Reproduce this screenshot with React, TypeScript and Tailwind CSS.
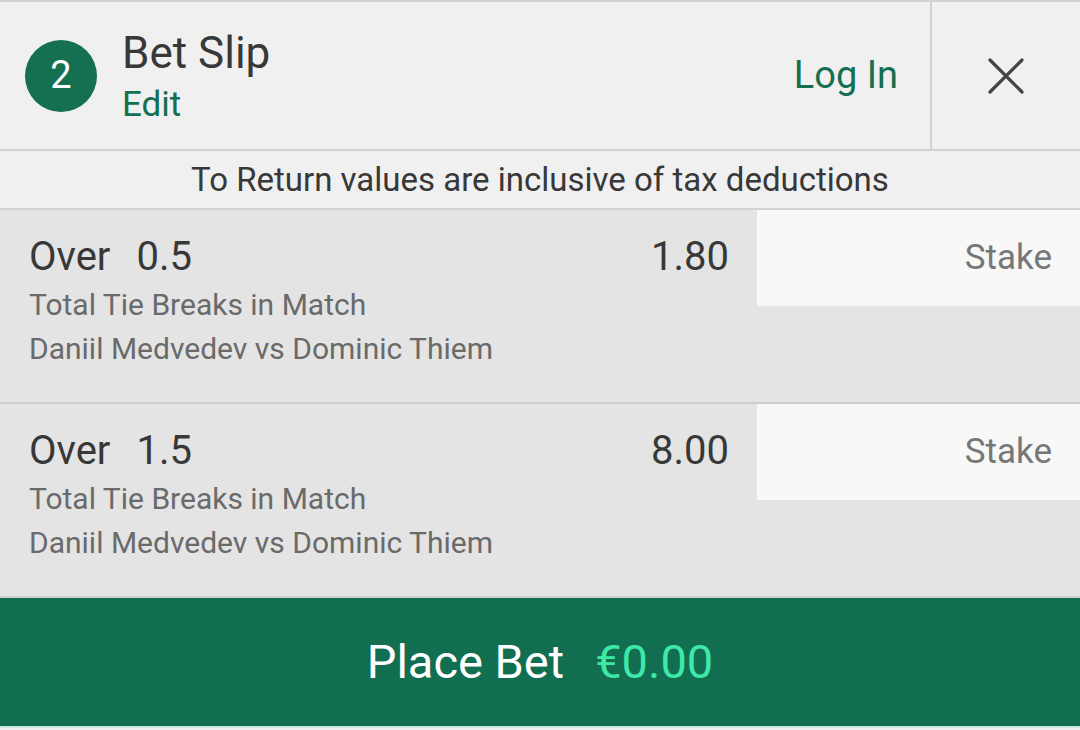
import React from "react";

const bets = [
    { line: "0.5", odds: "1.80" },
    { line: "1.5", odds: "8.00" },
];

function BetRow({ line, odds }: { line: string; odds: string }) {
    return (
        <div className="flex h-[194px] bg-[#e4e4e4] border-b-[2px] border-[#cfcfcf]">
            <div className="flex-1 pl-[29px] pr-[28px] pt-[24px]">
                <div className="flex justify-between text-[40px] leading-[46px] text-[#383838]">
                    <span>
                        Over<span className="ml-[26px]">{line}</span>
                    </span>
                    <span>{odds}</span>
                </div>
                <div className="mt-[3px] text-[30px] leading-[44px] text-[#6a6a6a]">
                    <p>Total Tie Breaks in Match</p>
                    <p>Daniil Medvedev vs Dominic Thiem</p>
                </div>
            </div>
            <div className="w-[323px] h-[96px] bg-[#f8f8f8] flex items-center justify-end pr-[28px] text-[35px] text-[#777]">
                Stake
            </div>
        </div>
    );
}

export default function App() {
    return (
        <div className="w-[1080px] h-[730px] bg-[#f0f0f0] overflow-hidden" style={{ fontFamily: "Roboto, 'Noto Sans', sans-serif" }}>
            <div className="flex h-[151px] border-t-[2px] border-b-[2px] border-[#d2d2d2]">
                <div className="flex-1 flex items-center pl-[25px]">
                    <div className="w-[72px] h-[72px] rounded-full bg-[#156f51] flex items-center justify-center text-white text-[38px]">
                        2
                    </div>
                    <div className="ml-[25px] pt-[4px] flex flex-col">
                        <span className="text-[44px] leading-[50px] text-[#383838]">Bet Slip</span>
                        <span className="mt-[5px] text-[35px] leading-[44px] text-[#156f51]">Edit</span>
                    </div>
                    <div className="ml-auto pr-[32px] text-[38px] text-[#156f51]">Log In</div>
                </div>
                <div className="w-[150px] border-l-[2px] border-[#d2d2d2] flex items-center justify-center">
                    <svg width="36" height="36" viewBox="0 0 36 36" className="text-[#444]">
                        <path d="M2 2 L34 34 M34 2 L2 34" stroke="currentColor" strokeWidth="3.2" strokeLinecap="round" />
                    </svg>
                </div>
            </div>
            <div className="h-[59px] flex items-center justify-center border-b-[2px] border-[#d2d2d2] text-[33px] text-[#383838]">
                To Return values are inclusive of tax deductions
            </div>
            {bets.map((b) => (
                <BetRow key={b.line} line={b.line} odds={b.odds} />
            ))}
            <div className="h-[130px] bg-[#116e50] flex items-center justify-center text-[47px] border-b-[2px] border-[#cde8dc]">
                <span className="text-white">Place Bet</span>
                <span className="ml-[31px] text-[#3ee8a6]">€0.00</span>
            </div>
        </div>
    );
}
